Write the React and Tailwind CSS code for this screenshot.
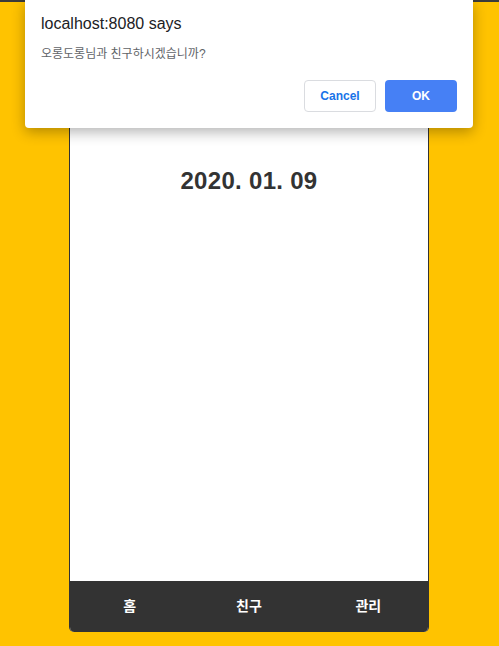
export default function App() {
  const tabs = ["홈", "친구", "관리"];
  return (
    <div
      className="relative w-[499px] h-[646px] overflow-hidden bg-[#ffc300]"
      style={{ fontFamily: '"Liberation Sans", "Noto Sans CJK KR", sans-serif' }}
    >
      <div className="h-[2px] bg-[#3b3b3b]" />

      {/* phone frame */}
      <div className="ml-[69px] w-[360px] h-[630px] flex flex-col border-x border-[#333] rounded-b-[5px] overflow-hidden bg-white">
        <div className="flex-1 flex flex-col items-center pt-[163px]">
          <h1 className="text-[24px] leading-[32px] font-bold text-[#333] tracking-[0.3px]">2020. 01. 09</h1>
        </div>
        <nav className="h-[51px] grid grid-cols-3 bg-[#333]">
          {tabs.map((t) => (
            <button key={t} className="text-white text-[14px] font-bold">
              {t}
            </button>
          ))}
        </nav>
      </div>

      {/* alert dialog */}
      <div className="absolute left-[25px] top-0 w-[448px] h-[128px] bg-white rounded-b-[4px] shadow-[0_4px_14px_rgba(0,0,0,0.3)] px-[16px]">
        <p className="pt-[14px] text-[16px] leading-[20px] text-[#202124]">localhost:8080 says</p>
        <p className="mt-[12px] text-[12px] leading-[17px] text-[#5f6368]">오롱도롱님과 친구하시겠습니까?</p>
        <div className="mt-[17px] flex justify-end gap-[9px]">
          <button className="w-[72px] h-[32px] rounded-[4px] border border-[#dadce0] bg-white text-[#1a73e8] text-[12px] font-bold">
            Cancel
          </button>
          <button className="w-[72px] h-[32px] rounded-[4px] bg-[#4680f5] text-white text-[12px] font-bold">
            OK
          </button>
        </div>
      </div>
    </div>
  );
}
